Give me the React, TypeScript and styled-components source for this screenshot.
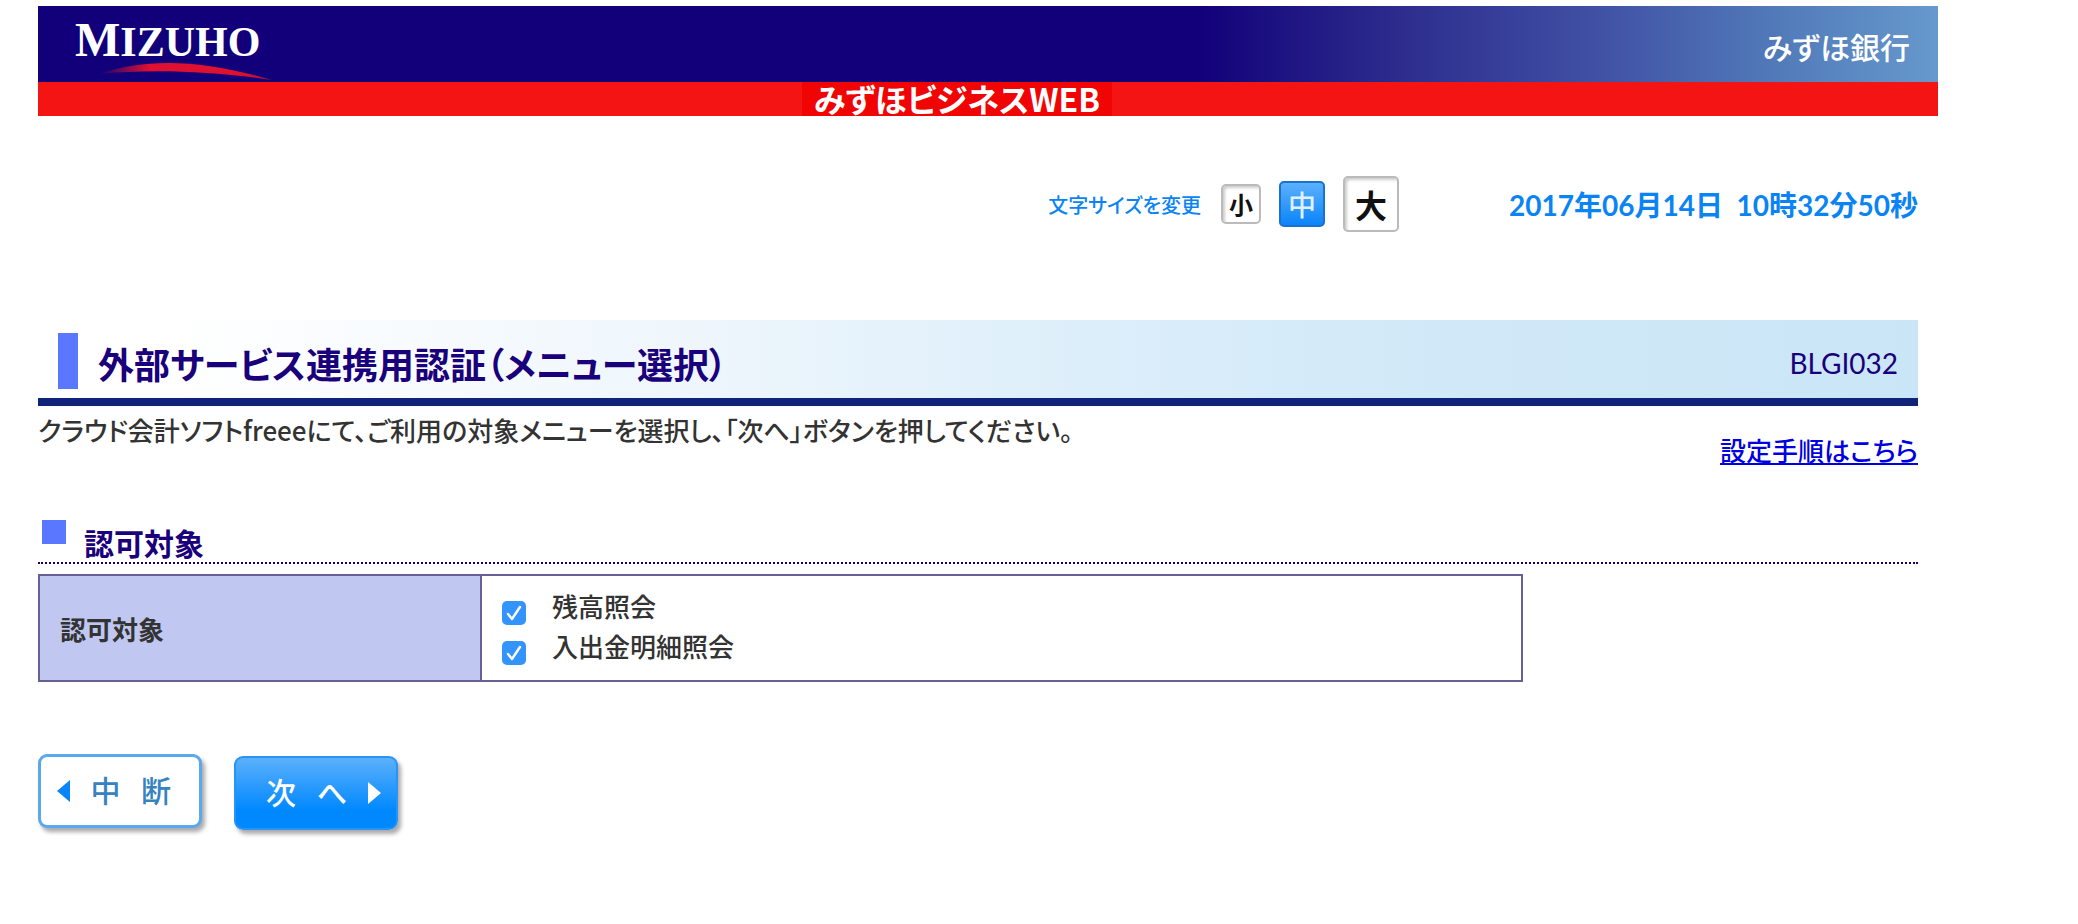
import React from "react";
import styled, { createGlobalStyle, css } from "styled-components";

const GlobalStyle = createGlobalStyle`
  *, *::before, *::after { box-sizing: border-box; }
  body {
    margin: 0;
    background: #fff;
    color: #333;
    font-family: "Noto Sans CJK JP", sans-serif;
    font-size: 26px;
    font-weight: 500;
    font-feature-settings: "palt";
  }
  h1, h2, p { margin: 0; }
  button { font: inherit; font-feature-settings: inherit; padding: 0; cursor: pointer; }
`;

const Page = styled.div`
  padding: 6px 140px 80px 38px;
`;

const Brand = styled.div`
  display: flex;
  justify-content: space-between;
  height: 76px;
  padding: 0 28px 0 36px;
  color: #fff;
  background: linear-gradient(90deg, #12007a 0%, #12007a 61%, #2b2a8c 71%, #4050a4 82%, #5078b8 91%, #6699cc 100%);
`;

const Logo = styled.svg`
  display: block;
  width: 204px;
  height: 76px;
  font-family: "Liberation Serif", serif;
  font-weight: 700;
`;

const BankName = styled.span`
  align-self: center;
  padding-top: 4px;
  font-size: 30px;
  line-height: 32px;
`;

const Service = styled.div`
  display: flex;
  justify-content: center;
  padding-right: 62px;
  background: #f51414;
`;

const ServiceName = styled.span`
  width: 310px;
  height: 34px;
  text-align: center;
  color: #fff;
  background: #f00404;
  font-size: 32px;
  font-weight: 700;
  line-height: 32px;
`;

const Content = styled.main`
  padding-right: 20px;
`;

const Tools = styled.div`
  display: flex;
  align-items: center;
  justify-content: flex-end;
  height: 56px;
  margin-top: 60px;
`;

const SizeGroup = styled.div`
  display: flex;
  align-items: center;
  gap: 18px;
  margin-right: 110px;
  color: #0a84f5;
  font-size: 20px;
`;

const SizeLabel = styled.span`
  padding-right: 2px;
`;

const SizeButton = styled.button<{ $box: number; $text: number; $active?: boolean }>`
  width: ${(p) => p.$box}px;
  height: ${(p) => p.$box}px;
  border-radius: 5px;
  font-size: ${(p) => p.$text}px;
  line-height: 1;
  ${(p) =>
    p.$active
      ? css`
          color: #dff0ff;
          border: 2px solid #1a72cc;
          background: linear-gradient(#5cb0fc, #0a84fb);
        `
      : css`
          color: #111;
          font-weight: 700;
          border: 2px solid #bbb;
          background: #fff;
          box-shadow: inset 2px 2px 3px #ccc;
        `}
`;

const Clock = styled.time`
  color: #0a84f5;
  font-family: Lato, "Noto Sans CJK JP", sans-serif;
  font-size: 28px;
  font-weight: 700;
  white-space: pre;
`;

const TitleBar = styled.header`
  display: flex;
  align-items: center;
  height: 86px;
  margin-top: 88px;
  padding: 4px 20px 0;
  color: #1a007a;
  border-bottom: 8px solid #0f2478;
  background: linear-gradient(90deg, #fff 7%, #eef6fc 35%, #dceefa 56%, #d0e8f8 76%, #cae6f6 100%);
`;

const Marker = styled.span`
  width: 20px;
  height: 56px;
  margin-right: 20px;
  background: #5a78ff;
`;

const Title = styled.h1`
  flex: 1;
  padding-top: 4px;
  font-size: 36px;
  line-height: 52px;
`;

const ScreenCode = styled.span`
  padding-top: 4px;
  font-family: Lato, sans-serif;
  font-size: 28px;
  font-weight: 400;
`;

const Lead = styled.div`
  display: flex;
  justify-content: space-between;
  line-height: 40px;
  padding-top: 4px;
`;

const GuideLink = styled.a`
  margin-top: 20px;
  color: #0000e0;
  text-decoration-thickness: 2px;
  text-underline-offset: 2px;
`;

const Section = styled.h2`
  display: flex;
  gap: 18px;
  margin-top: 50px;
  padding-left: 4px;
  height: 44px;
  color: #1a007a;
  border-bottom: 2px dotted #1a0066;
  font-size: 30px;
  line-height: 44px;

  &::before {
    content: "";
    width: 24px;
    height: 24px;
    background: #5a78ff;
  }
`;

const Targets = styled.table`
  width: 79%;
  height: 108px;
  margin-top: 10px;
  border-collapse: collapse;
  table-layout: fixed;

  th, td { border: 2px solid #666096; text-align: left; }
  th { width: 29.8%; padding: 0 20px; background: #c0c8f2; }
  td { padding: 10px 20px 0; }
`;

const Option = styled.label`
  display: flex;
  align-items: center;
  gap: 26px;
  height: 40px;
  line-height: 26px;

  span { padding-bottom: 14px; }
`;

const Check = styled.input`
  appearance: none;
  width: 24px;
  height: 24px;
  margin: 0;
  border-radius: 5px;
  background: #cfd4dc;

  &:checked {
    background: #3294fc
      url("data:image/svg+xml,%3Csvg xmlns='http://www.w3.org/2000/svg' viewBox='0 0 24 24'%3E%3Cpath d='M6 13l4 5 8-12' fill='none' stroke='white' stroke-width='2.4' stroke-linecap='round' stroke-linejoin='round'/%3E%3C/svg%3E");
  }
`;

const Actions = styled.div`
  display: flex;
  gap: 32px;
  margin-top: 72px;
`;

const ActionButton = styled.button<{ $primary?: boolean }>`
  display: flex;
  align-items: center;
  justify-content: space-between;
  width: 164px;
  height: 74px;
  padding: 0 28px 0 16px;
  color: #3583c0;
  background: #fff;
  border: 3px solid #5aa8f0;
  border-radius: 9px;
  box-shadow: 3px 4px 4px #aaa;
  font-size: 30px;

  span { padding-bottom: 4px; }
  svg { width: 13px; height: 24px; fill: #0a84fb; }

  ${(p) =>
    p.$primary &&
    css`
      margin-top: 2px;
      padding: 0 15px 0 30px;
      color: #fff;
      border: 2px solid #2a94f4;
      background: linear-gradient(#5cb0fc, #0088ff 75%);
      svg { fill: #fff; }
    `}
`;

export default function App() {
  return (
    <>
      <GlobalStyle />
      <Page>
        <Brand>
          <Logo viewBox="0 0 204 76" role="img" aria-label="MIZUHO">
            <defs>
              <linearGradient id="swoosh" x1="0" x2="1">
                <stop offset="0" stopColor="#e01030" stopOpacity="0" />
                <stop offset="0.3" stopColor="#e01030" />
                <stop offset="0.8" stopColor="#e01030" />
                <stop offset="1" stopColor="#b01040" />
              </linearGradient>
            </defs>
            <text x="1" y="50" fill="#fff" fontSize="42">
              <tspan fontSize="48">M</tspan>IZUHO
            </text>
            <path d="M24 68C75 51 130 54 198 74C135 65 80 63 24 68Z" fill="url(#swoosh)" />
          </Logo>
          <BankName>みずほ銀行</BankName>
        </Brand>
        <Service>
          <ServiceName>みずほビジネスWEB</ServiceName>
        </Service>

        <Content>
          <Tools>
            <SizeGroup role="group" aria-label="文字サイズを変更">
              <SizeLabel>文字サイズを変更</SizeLabel>
              <SizeButton type="button" $box={40} $text={24}>小</SizeButton>
              <SizeButton type="button" $box={46} $text={28} $active>中</SizeButton>
              <SizeButton type="button" $box={56} $text={32}>大</SizeButton>
            </SizeGroup>
            <Clock>2017年06月14日  10時32分50秒</Clock>
          </Tools>

          <TitleBar>
            <Marker />
            <Title>外部サービス連携用認証（メニュー選択）</Title>
            <ScreenCode>BLGI032</ScreenCode>
          </TitleBar>
          <Lead>
            <p>クラウド会計ソフトfreeeにて、ご利用の対象メニューを選択し、「次へ」ボタンを押してください。</p>
            <GuideLink href="#guide">設定手順はこちら</GuideLink>
          </Lead>

          <Section>認可対象</Section>
          <Targets>
            <tbody>
              <tr>
                <th scope="row">認可対象</th>
                <td>
                  <Option>
                    <Check type="checkbox" defaultChecked />
                    <span>残高照会</span>
                  </Option>
                  <Option>
                    <Check type="checkbox" defaultChecked />
                    <span>入出金明細照会</span>
                  </Option>
                </td>
              </tr>
            </tbody>
          </Targets>

          <Actions>
            <ActionButton type="button">
              <svg viewBox="0 0 13 24"><path d="M13 1v22L0 12z" /></svg>
              <span>中</span>
              <span>断</span>
            </ActionButton>
            <ActionButton type="button" $primary>
              <span>次</span>
              <span>へ</span>
              <svg viewBox="0 0 13 24"><path d="M0 1v22l13-11z" /></svg>
            </ActionButton>
          </Actions>
        </Content>
      </Page>
    </>
  );
}
